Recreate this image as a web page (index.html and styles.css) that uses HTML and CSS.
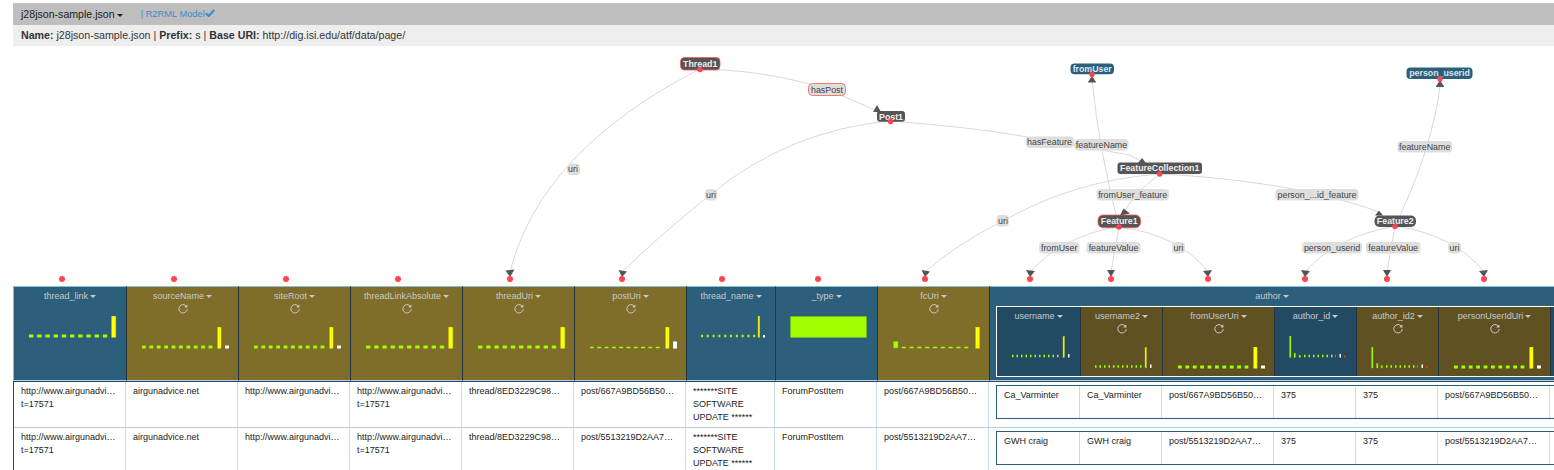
FILE: index.html
```html
<!DOCTYPE html>
<html lang="en">
<head>
    <meta charset="UTF-8">
    <meta name="viewport" content="width=device-width, initial-scale=1.0">
    <title>j28json-sample.json</title>
    <link rel="stylesheet" href="styles.css">
</head>
<body>
    <svg class="defs" aria-hidden="true">
        <symbol id="refresh" viewBox="0 0 10 10">
            <path class="refresh-line" d="M8.3 2.2A4.2 4.2 0 1 0 9.2 5"/>
            <polygon class="refresh-head" points="9.4,0.4 9.4,3.6 6.2,3.6"/>
        </symbol>
        <symbol id="chart-wide" viewBox="0 0 112 24">
            <line class="dash" x1="15" x2="94" y1="20" y2="20" stroke-dasharray="4.4 3.8"/>
            <rect class="bar-y" x="97.5" y="0" width="4.4" height="21.5"/>
        </symbol>
        <symbol id="chart-tail" viewBox="0 0 112 24">
            <line class="dash" x1="15" x2="88" y1="20" y2="20" stroke-dasharray="3.8 3.6"/>
            <rect class="bar-y" x="90.5" y="0" width="3.6" height="21.5"/>
            <rect class="bar-w" x="98" y="18.5" width="4" height="3"/>
        </symbol>
        <symbol id="chart-thin" viewBox="0 0 112 24">
            <line class="dash-thin" x1="15" x2="88" y1="20.5" y2="20.5" stroke-dasharray="3.9 3.4"/>
            <rect class="bar-y" x="90.5" y="0" width="3.6" height="21.5"/>
            <rect class="bar-w" x="98" y="14.5" width="4" height="7"/>
        </symbol>
    </svg>

    <div class="toolbar">
        <span class="file-name">j28json-sample.json<span class="caret"></span></span>
        <span class="model-link">| R2RML Model</span>
        <svg class="check" viewBox="0 0 10 8"><path d="M0.8 4.2L3.6 7L9.2 1"/></svg>
    </div>
    <div class="info-bar">
        <b>Name:</b> j28json-sample.json | <b>Prefix:</b> s | <b>Base URI:</b> http://dig.isi.edu/atf/data/page/
    </div>

    <div class="graph">
        <svg class="graph-svg" viewBox="0 46 1554 240">
            <g class="links">
                <path d="M700 69Q541 150 510 272"/>
                <path d="M700 69C750 70 800 78 843 96L875 110"/>
                <path d="M890 121Q790 130 711 194Q660 235 622 272"/>
                <path d="M890 121Q980 128 1027 137L1130 155L1142 162"/>
                <path d="M1119 227Q1099 150 1092 80"/>
                <path d="M1160 174Q1135 192 1124 212"/>
                <path d="M1160 174C1240 178 1320 190 1379 212"/>
                <path d="M1160 174Q1075 180 1003 221Q955 245 925 272"/>
                <path d="M1395 226Q1432 150 1440 86"/>
                <path d="M1115 227Q1060 238 1030 272"/>
                <path d="M1119 227L1111 272"/>
                <path d="M1119 227Q1180 235 1208 272"/>
                <path d="M1395 226Q1335 237 1305 272"/>
                <path d="M1395 226L1387 272"/>
                <path d="M1395 226Q1455 235 1484 272"/>
            </g>

            <g class="edge-label"><rect class="picked" x="808.5" y="83.5" width="37" height="12" rx="4"/><text x="827" y="92.6">hasPost</text></g>
            <g class="edge-label"><rect x="705" y="189" width="12" height="11.5" rx="4"/><text x="711" y="197.8">uri</text></g>
            <g class="edge-label"><rect x="567" y="163.5" width="13" height="11.5" rx="4"/><text x="573" y="172.3">uri</text></g>
            <g class="edge-label"><rect x="1026" y="136.5" width="48" height="11.5" rx="4"/><text x="1049.5" y="145.3">hasFeature</text></g>
            <g class="edge-label"><rect x="1074.5" y="139" width="54" height="11.5" rx="4"/><text x="1101.5" y="147.8">featureName</text></g>
            <g class="edge-label"><rect x="1397.5" y="141" width="54.5" height="11.5" rx="4"/><text x="1424.7" y="149.8">featureName</text></g>
            <g class="edge-label"><rect x="1096.5" y="189" width="72.5" height="11.5" rx="4"/><text x="1132.7" y="197.8">fromUser_feature</text></g>
            <g class="edge-label"><rect x="1275.5" y="189" width="83" height="11.5" rx="4"/><text x="1317" y="197.8">person_...id_feature</text></g>
            <g class="edge-label"><rect x="996.5" y="215" width="12.5" height="11.5" rx="4"/><text x="1003" y="223.8">uri</text></g>
            <g class="edge-label"><rect x="1039" y="242" width="40.5" height="11.5" rx="4"/><text x="1059.2" y="250.8">fromUser</text></g>
            <g class="edge-label"><rect x="1086.5" y="242" width="54" height="11.5" rx="4"/><text x="1113.5" y="250.8">featureValue</text></g>
            <g class="edge-label"><rect x="1172" y="242" width="13" height="11.5" rx="4"/><text x="1178.5" y="250.8">uri</text></g>
            <g class="edge-label"><rect x="1302" y="242" width="60" height="11.5" rx="4"/><text x="1332" y="250.8">person_userid</text></g>
            <g class="edge-label"><rect x="1366" y="242" width="54.5" height="11.5" rx="4"/><text x="1393.2" y="250.8">featureValue</text></g>
            <g class="edge-label"><rect x="1448" y="242" width="13" height="11.5" rx="4"/><text x="1454.5" y="250.8">uri</text></g>

            <g class="node"><rect class="picked" x="680.5" y="57.5" width="39.5" height="12.5" rx="4"/><text x="700.2" y="66.9">Thread1</text></g>
            <g class="node"><rect x="877" y="111" width="28" height="10.8" rx="3"/><text x="891" y="119.6">Post1</text></g>
            <g class="node"><rect x="1117.5" y="162.5" width="84.5" height="11.5" rx="3"/><text x="1159.7" y="171.4">FeatureCollection1</text></g>
            <g class="node"><rect class="picked" x="1098" y="215" width="42.5" height="12.7" rx="5"/><text x="1119.2" y="224.4">Feature1</text></g>
            <g class="node"><rect x="1374.5" y="215.5" width="41.5" height="11.5" rx="5"/><text x="1395.2" y="224.4">Feature2</text></g>
            <g class="node column-node"><rect x="1070.5" y="63.5" width="43.5" height="10.8" rx="4"/><text x="1092.2" y="72.2">fromUser</text></g>
            <g class="node column-node"><rect x="1406.5" y="67.5" width="66" height="11.5" rx="4"/><text x="1439.5" y="76.4">person_userid</text></g>

            <g class="arrows">
                <polygon points="877,105 881,112 873,112"/>
                <polygon points="1092,76 1096.3,82.5 1087.7,82.5"/>
                <polygon points="1440,80 1444.3,87 1435.7,87"/>
                <polygon points="1142,158 1146,163 1138,163"/>
                <polygon points="1379,210.5 1383,215.5 1375,215.5"/>
                <polygon points="1123.5,208.5 1130,213.5 1120,215.5"/>
                <polygon points="510,277 505.5,270.5 514.5,269.5"/>
                <polygon points="622,277 618.5,270 627,271.5"/>
                <polygon points="925,277 921.5,270 930,271.5"/>
                <polygon points="1030,277 1026,270 1035,271"/>
                <polygon points="1111,277 1107,270 1115,270"/>
                <polygon points="1208,277 1203,271 1212,270"/>
                <polygon points="1305,277 1301,270 1310,271"/>
                <polygon points="1387,277 1383,270 1391,270"/>
                <polygon points="1484,277 1479,271 1488,270"/>
            </g>

            <g class="dots">
                <circle cx="700" cy="69.5" r="2.7"/>
                <circle cx="890.5" cy="121.5" r="2.7"/>
                <circle cx="1092" cy="74.5" r="2.7"/>
                <circle cx="1440" cy="79" r="2.7"/>
                <circle cx="1159.7" cy="174" r="2.7"/>
                <circle cx="1119" cy="227" r="2.7"/>
                <circle cx="1395" cy="226.5" r="2.7"/>
                <circle cx="62" cy="279" r="3"/>
                <circle cx="174" cy="279" r="3"/>
                <circle cx="286" cy="279" r="3"/>
                <circle cx="398" cy="279" r="3"/>
                <circle cx="510" cy="279" r="3"/>
                <circle cx="622" cy="279" r="3"/>
                <circle cx="722" cy="279" r="3"/>
                <circle cx="818" cy="279" r="3"/>
                <circle cx="925" cy="279" r="3"/>
                <circle cx="1030" cy="279" r="3"/>
                <circle cx="1111" cy="279" r="3"/>
                <circle cx="1208" cy="279" r="3"/>
                <circle cx="1305" cy="279" r="3"/>
                <circle cx="1387" cy="279" r="3"/>
                <circle cx="1484" cy="279" r="3"/>
            </g>
        </svg>
    </div>

    <div class="worksheet">
        <div class="head-row">
            <div class="col-head">
                <div class="col-name">thread_link<span class="caret"></span></div>
                <svg class="chart"><use href="#chart-wide"/></svg>
            </div>
            <div class="col-head olive">
                <div class="col-name">sourceName<span class="caret"></span></div>
                <svg class="refresh"><use href="#refresh"/></svg>
                <svg class="chart"><use href="#chart-tail"/></svg>
            </div>
            <div class="col-head olive">
                <div class="col-name">siteRoot<span class="caret"></span></div>
                <svg class="refresh"><use href="#refresh"/></svg>
                <svg class="chart"><use href="#chart-tail"/></svg>
            </div>
            <div class="col-head olive">
                <div class="col-name">threadLinkAbsolute<span class="caret"></span></div>
                <svg class="refresh"><use href="#refresh"/></svg>
                <svg class="chart"><use href="#chart-wide"/></svg>
            </div>
            <div class="col-head olive">
                <div class="col-name">threadUri<span class="caret"></span></div>
                <svg class="refresh"><use href="#refresh"/></svg>
                <svg class="chart"><use href="#chart-wide"/></svg>
            </div>
            <div class="col-head olive">
                <div class="col-name">postUri<span class="caret"></span></div>
                <svg class="refresh"><use href="#refresh"/></svg>
                <svg class="chart"><use href="#chart-thin"/></svg>
            </div>
            <div class="col-head">
                <div class="col-name">thread_name<span class="caret"></span></div>
                <svg class="chart">
                    <line class="dot-line" x1="14" x2="69" y1="20" y2="20" stroke-dasharray="2 3.8"/>
                    <rect class="bar-y" x="71" y="0" width="1.8" height="21.5"/>
                    <rect class="bar-w" x="76" y="19" width="2" height="2.5"/>
                </svg>
            </div>
            <div class="col-head">
                <div class="col-name">_type<span class="caret"></span></div>
                <svg class="chart"><rect class="bar-g" x="14.5" y="0.5" width="76" height="21"/></svg>
            </div>
            <div class="col-head olive">
                <div class="col-name">fcUri<span class="caret"></span></div>
                <svg class="refresh"><use href="#refresh"/></svg>
                <svg class="chart">
                    <rect class="bar-g" x="15.5" y="14.5" width="4.5" height="6.5"/>
                    <line class="dash-thin" x1="23.7" x2="94" y1="20.5" y2="20.5" stroke-dasharray="4.2 3.6"/>
                    <rect class="bar-y" x="97.5" y="0" width="4.2" height="21.5"/>
                </svg>
            </div>
            <div class="col-head group-head">
                <div class="col-name">author<span class="caret"></span></div>
                <div class="nested-head">
                    <div class="col-head sub">
                        <div class="col-name">username<span class="caret"></span></div>
                        <svg class="chart">
                            <line class="dot-line" x1="15" x2="64" y1="20" y2="20" stroke-dasharray="1.5 3"/>
                            <rect class="bar-y" x="66" y="0" width="1.5" height="21.5"/>
                            <rect class="bar-w" x="71" y="18" width="1.5" height="3.5"/>
                        </svg>
                    </div>
                    <div class="col-head sub olive">
                        <div class="col-name">username2<span class="caret"></span></div>
                        <svg class="refresh"><use href="#refresh"/></svg>
                        <svg class="chart">
                            <line class="dot-line" x1="14" x2="62" y1="19.5" y2="19.5" stroke-dasharray="1.5 3"/>
                            <rect class="bar-y" x="64" y="0" width="1.5" height="21"/>
                            <rect class="bar-w" x="69" y="17.5" width="1.5" height="3.5"/>
                        </svg>
                    </div>
                    <div class="col-head sub olive">
                        <div class="col-name">fromUserUri<span class="caret"></span></div>
                        <svg class="refresh"><use href="#refresh"/></svg>
                        <svg class="chart"><use href="#chart-tail"/></svg>
                    </div>
                    <div class="col-head sub">
                        <div class="col-name">author_id<span class="caret"></span></div>
                        <svg class="chart">
                            <rect class="bar-g" x="14.5" y="0" width="1.5" height="21.5"/>
                            <rect class="bar-g" x="19" y="17" width="1.5" height="4.5"/>
                            <rect class="bar-g" x="24" y="19" width="1.5" height="2.5"/>
                            <line class="dot-line" x1="29" x2="61" y1="20" y2="20" stroke-dasharray="1.5 3"/>
                            <rect class="bar-w" x="64.5" y="18" width="1.5" height="3.5"/>
                            <rect class="bar-r" x="69" y="19.5" width="1.5" height="2"/>
                        </svg>
                    </div>
                    <div class="col-head sub olive">
                        <div class="col-name">author_id2<span class="caret"></span></div>
                        <svg class="refresh"><use href="#refresh"/></svg>
                        <svg class="chart">
                            <rect class="bar-g" x="14.5" y="0" width="1.5" height="21"/>
                            <rect class="bar-g" x="19.5" y="16.5" width="1.5" height="4.5"/>
                            <rect class="bar-g" x="24" y="18.5" width="1.5" height="2.5"/>
                            <line class="dot-line" x1="29" x2="61" y1="19.5" y2="19.5" stroke-dasharray="1.5 3"/>
                            <rect class="bar-w" x="64.5" y="17.5" width="1.5" height="3.5"/>
                            <rect class="bar-r" x="69" y="19" width="1.5" height="2"/>
                        </svg>
                    </div>
                    <div class="col-head sub olive">
                        <div class="col-name">personUserIdUri<span class="caret"></span></div>
                        <svg class="refresh"><use href="#refresh"/></svg>
                        <svg class="chart"><use href="#chart-tail"/></svg>
                    </div>
                    <div class="col-head sub"></div>
                </div>
            </div>
        </div>

        <div class="data-body">
            <div class="data-row">
                <div class="cell">http://www.airgunadvi…<br>t=17571</div>
                <div class="cell">airgunadvice.net</div>
                <div class="cell">http://www.airgunadvi…</div>
                <div class="cell">http://www.airgunadvi…<br>t=17571</div>
                <div class="cell">thread/8ED3229C98…</div>
                <div class="cell">post/667A9BD56B50…</div>
                <div class="cell">*******SITE<br>SOFTWARE<br>UPDATE ******</div>
                <div class="cell">ForumPostItem</div>
                <div class="cell">post/667A9BD56B50…</div>
                <div class="group-cell">
                    <div class="nested-row">
                        <div class="cell">Ca_Varminter</div>
                        <div class="cell">Ca_Varminter</div>
                        <div class="cell">post/667A9BD56B50…</div>
                        <div class="cell">375</div>
                        <div class="cell">375</div>
                        <div class="cell">post/667A9BD56B50…</div>
                        <div class="cell"></div>
                    </div>
                </div>
            </div>
            <div class="data-row">
                <div class="cell">http://www.airgunadvi…<br>t=17571</div>
                <div class="cell">airgunadvice.net</div>
                <div class="cell">http://www.airgunadvi…</div>
                <div class="cell">http://www.airgunadvi…<br>t=17571</div>
                <div class="cell">thread/8ED3229C98…</div>
                <div class="cell">post/5513219D2AA7…</div>
                <div class="cell">*******SITE<br>SOFTWARE<br>UPDATE ******</div>
                <div class="cell">ForumPostItem</div>
                <div class="cell">post/5513219D2AA7…</div>
                <div class="group-cell">
                    <div class="nested-row">
                        <div class="cell">GWH craig</div>
                        <div class="cell">GWH craig</div>
                        <div class="cell">post/5513219D2AA7…</div>
                        <div class="cell">375</div>
                        <div class="cell">375</div>
                        <div class="cell">post/5513219D2AA7…</div>
                        <div class="cell"></div>
                    </div>
                </div>
            </div>
        </div>
    </div>
</body>
</html>
```

FILE: styles.css
```css
html, body {
    height: 470px;
    overflow: hidden;
}

body {
    margin: 0;
    padding-top: 3px;
    box-sizing: border-box;
    background-color: #fff;
    color: #333;
    font-family: "Liberation Sans", Arial, sans-serif;
    font-size: 9px;
}

.defs {
    display: none;
}

.caret {
    display: inline-block;
    margin-left: 2px;
    vertical-align: middle;
    border-top: 3px solid;
    border-left: 3px solid transparent;
    border-right: 3px solid transparent;
}

/* top bars */
.toolbar {
    display: flex;
    align-items: center;
    height: 22px;
    margin-left: 13px;
    padding-left: 8px;
    background-color: #bebebe;
}

.file-name {
    color: #222;
    font-size: 10.6px;
}

.model-link {
    margin-left: 18px;
    color: #428bca;
    font-size: 9.3px;
}

.check {
    width: 10px;
    height: 8px;
    margin-top: -3px;
}

.check path {
    fill: none;
    stroke: #428bca;
    stroke-width: 2.2;
}

.info-bar {
    height: 21px;
    margin-left: 13px;
    padding-left: 8px;
    background-color: #eee;
    font-size: 10.65px;
    line-height: 21px;
}

/* model graph */
.graph {
    height: 240px;
}

.graph-svg {
    display: block;
    width: 1554px;
    height: 240px;
}

.links path {
    fill: none;
    stroke: #d8d8d8;
    stroke-width: 1;
}

.graph-svg text {
    font-family: "Liberation Sans", Arial, sans-serif;
    text-anchor: middle;
}

.edge-label rect {
    fill: #dedede;
}

.edge-label text {
    fill: #444;
    font-size: 8.9px;
}

.node rect {
    fill: #555;
}

.node text {
    fill: #eee;
    font-size: 8.8px;
    font-weight: bold;
}

.column-node rect {
    fill: #2b5f7c;
}

.column-node text {
    fill: #d8e6ee;
}

.graph-svg rect.picked {
    stroke: #f55;
    stroke-width: 0.8;
}

.arrows polygon {
    fill: #555;
}

.dots circle {
    fill: #ff4451;
}

/* worksheet */
.worksheet {
    width: 1541px;
    margin-left: 13px;
    overflow: hidden;
}

.head-row {
    display: grid;
    grid-template-columns: 114px 112px 112px 112px 112px 112px 89px 102px 112px 564px;
    height: 95px;
}

.col-head {
    box-sizing: border-box;
    min-width: 0;
    padding-top: 2px;
    border-top: 1px solid #8fbcd4;
    border-bottom: 1px solid #a9d0e4;
    border-right: 1px solid #26343f;
    background-color: #2b5f7c;
    color: #c9c9c9;
    text-align: center;
}

.col-head:first-child {
    border-left: 1px solid #8fbcd4;
}

.col-head.olive {
    background-color: #7f6d2a;
}

.col-name {
    height: 14px;
    line-height: 14px;
    white-space: nowrap;
}

.refresh {
    display: block;
    width: 10px;
    height: 10px;
    margin: 1px auto 3px;
}

.refresh-line {
    fill: none;
    stroke: #ccc;
    stroke-width: 1;
}

.refresh-head {
    fill: #ccc;
}

.chart {
    display: block;
    width: 112px;
    height: 24px;
    margin-top: 13px;
}

.dash, .dash-thin, .dot-line {
    stroke: #a2ff00;
}

.dash {
    stroke-width: 3;
}

.dash-thin {
    stroke-width: 1.5;
}

.dot-line {
    stroke-width: 2.5;
}

.bar-y {
    fill: #ff0;
    stroke: #a9b415;
    stroke-width: 0.4;
}

.bar-g {
    fill: #a2ff00;
    stroke: #7fc214;
    stroke-width: 0.4;
}

.bar-w {
    fill: #fff;
}

.bar-r {
    fill: #d8401c;
}

.group-head {
    border-right: none;
}

.nested-head {
    display: grid;
    grid-template-columns: 84px 82px 112px 82px 82px 112px 100px;
    box-sizing: border-box;
    width: 660px;
    height: 71px;
    margin: 3px 0 0 6px;
    border: 1px solid #fff;
}

.col-head.sub, .col-head.sub:first-child {
    border-top: none;
    border-left: none;
    border-bottom: none;
    background-color: #234a63;
}

.col-head.sub.olive {
    background-color: #5f5122;
}

.data-body {
    border-top: 1px solid #2b4a5f;
    border-left: 1px solid #2b4a5f;
}

.data-row {
    display: grid;
    grid-template-columns: 112px 112px 112px 112px 112px 112px 89px 102px 112px 564px;
    box-sizing: border-box;
    height: 46px;
    border-bottom: 1px solid #b4d0e0;
}

.cell {
    box-sizing: border-box;
    min-width: 0;
    padding: 3px 0 0 7px;
    border-right: 1px solid #c7dbe7;
    color: #222;
    line-height: 13px;
    white-space: nowrap;
    overflow: hidden;
}

.group-cell {
    padding: 3px 0 0 7px;
}

.nested-row {
    display: grid;
    grid-template-columns: 83px 82px 112px 82px 82px 112px 100px;
    box-sizing: border-box;
    width: 660px;
    height: 34px;
    border: 1px solid #2b5f7c;
}
```
